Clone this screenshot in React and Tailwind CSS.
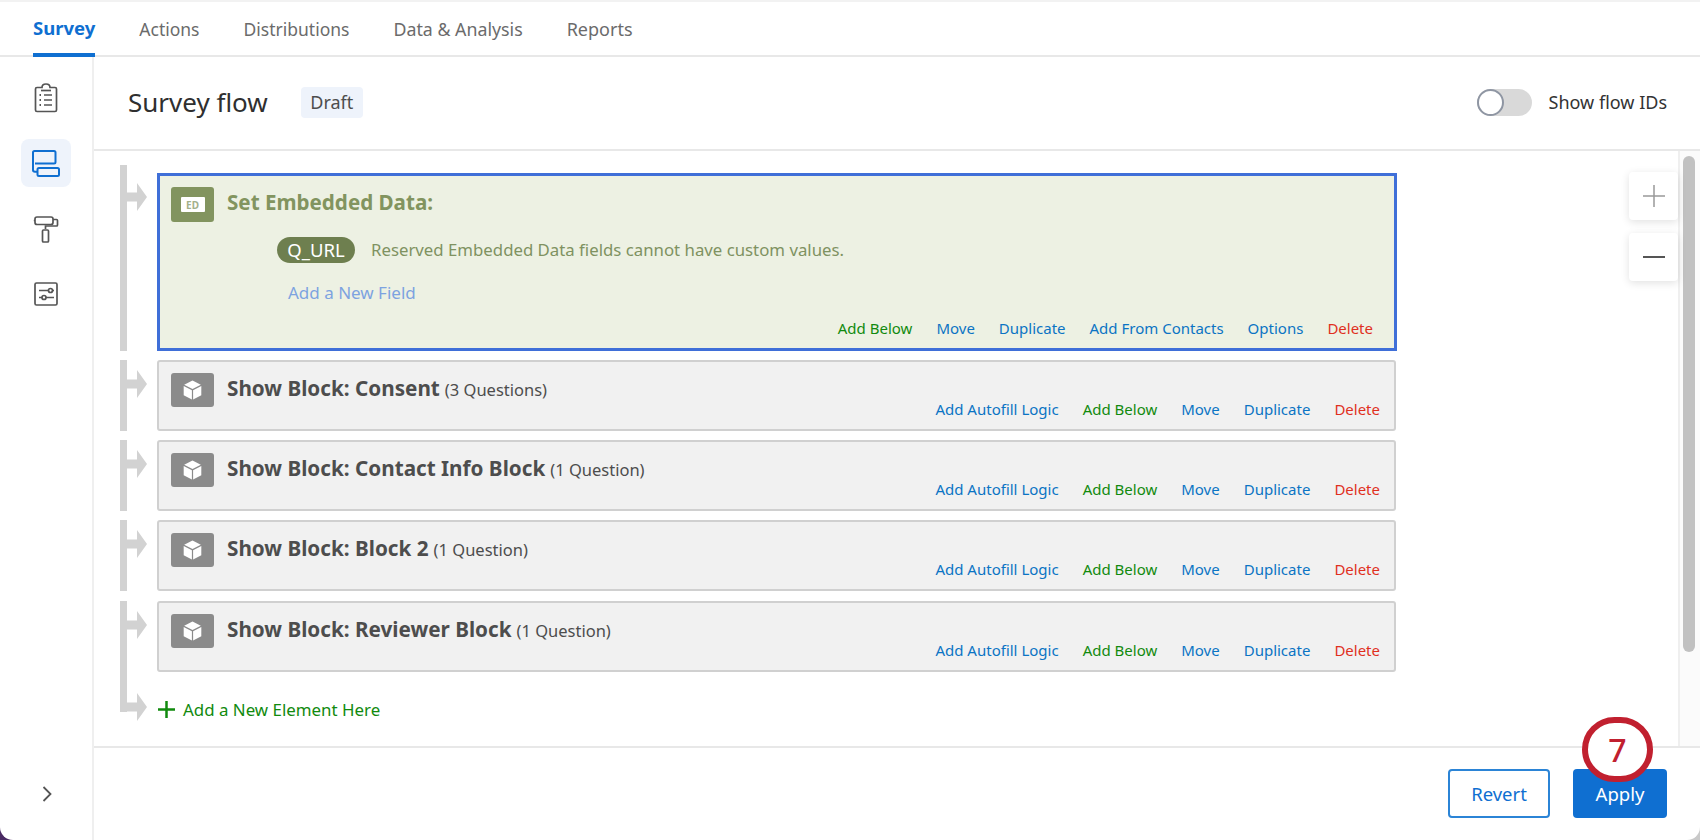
import React from 'react';

const FONT = "font-['Noto_Sans',sans-serif]";

function ClipboardIcon() {
  return (
    <svg width="24" height="30" viewBox="0 0 24 30" fill="none" stroke="#555" strokeWidth="1.7">
      <path d="M8 4.500H3a1.500 1.500 0 0 0-1.500 1.500v21A1.500 1.500 0 0 0 3 28.500h18a1.500 1.500 0 0 0 1.500-1.500V6A1.500 1.500 0 0 0 21 4.500h-5c0-2-1.600-3.500-4-3.500S8 2.500 8 4.500Z" />
      <path d="M7 7.500h10" />
      <path d="M10 12h8M10 17h8M10 22h8" />
      <path d="M5.500 12h1.500M5.500 17h1.500M5.500 22h1.500" strokeWidth="2" />
    </svg>
  );
}

function FlowIcon() {
  return (
    <svg width="28" height="27" viewBox="0 0 28 27" fill="none" stroke="#0f6fd1" strokeWidth="2">
      <path d="M3 13.500H22a1.500 1.500 0 0 0 1.500-1.500V2.500A1.500 1.500 0 0 0 22 1H2.500A1.500 1.500 0 0 0 1 2.500V20c0 1.200.9 1.800 2 1.800h3" />
      <rect x="5.500" y="18" width="21.500" height="8" rx="1.500" />
    </svg>
  );
}

function RollerIcon() {
  return (
    <svg width="26" height="27" viewBox="0 0 26 27" fill="none" stroke="#555" strokeWidth="1.7">
      <rect x="2" y="1" width="18" height="7.500" rx="2" />
      <path d="M2 4.500H0.800" />
      <path d="M20 3.500h3.500a1 1 0 0 1 1 1v4.500a1 1 0 0 1-1 1H12.500v3" />
      <rect x="9.500" y="14" width="6" height="12" rx="1" />
    </svg>
  );
}

function SlidersIcon() {
  return (
    <svg width="24" height="24" viewBox="0 0 24 24" fill="none" stroke="#555" strokeWidth="1.7">
      <rect x="1" y="1" width="22" height="22" rx="1.500" />
      <path d="M5 8.500h9.500M18.500 8.500H20M5 15.500h3M12 15.500h8" />
      <circle cx="16.500" cy="8.500" r="2" />
      <circle cx="10" cy="15.500" r="2" />
    </svg>
  );
}

function BlockIcon() {
  return (
    <div className="flex h-[34px] w-[43px] shrink-0 items-center justify-center rounded-[3px] bg-[#8b8b8b]">
      <svg width="19" height="20" viewBox="0 0 19 20" fill="#fff">
        <path d="M9.500 0.500 17.800 4.800 9.500 9 1.200 4.800Z" />
        <path d="M0.700 6 8.900 10.200V19.500L0.700 15.200Z" />
        <path d="M18.300 6 10.100 10.200V19.500L18.300 15.200Z" />
      </svg>
    </div>
  );
}

// connector between the flow line and a card
function Arrow({ className }) {
  return (
    <svg width="20" height="28" viewBox="0 0 20 28" className={`shrink-0 ${className}`} fill="#d2d2d2">
      <path d="M0 9.500H10V0L20 14 10 28V18.500H0Z" />
    </svg>
  );
}

function Actions({ items, className }) {
  return (
    <div className={`flex justify-end gap-[24px] text-[15px] leading-[20px] ${className}`}>
      {items.map(([label, color]) => (
        <span key={label} className={color}>{label}</span>
      ))}
    </div>
  );
}

const BLUE = 'text-[#0b74c4]';
const GREEN = 'text-[#118a0e]';
const RED = 'text-[#e0301e]';

const blockActions = [
  ['Add Autofill Logic', BLUE],
  ['Add Below', GREEN],
  ['Move', BLUE],
  ['Duplicate', BLUE],
  ['Delete', RED],
];

const blocks = [
  { name: 'Consent', count: '(3 Questions)' },
  { name: 'Contact Info Block', count: '(1 Question)' },
  { name: 'Block 2', count: '(1 Question)' },
  { name: 'Reviewer Block', count: '(1 Question)' },
];

function BlockRow({ name, count }) {
  return (
    <div className="flex pb-[9.200px]">
      <div className="w-[7px] shrink-0 bg-[#d2d2d2]" />
      <div className="w-[30px] shrink-0">
        <Arrow className="mt-[10px]" />
      </div>
      <div className="h-[71px] w-[1239px] rounded-[3px] border-2 border-[#d0d0d0] bg-[#f1f1f1] pl-[12px] pt-[11px]">
        <div className="flex items-start">
          <BlockIcon />
          <div className="ml-[13px] mt-[2px] leading-[27px] text-[#4d4d4d]">
            <span className="text-[20.700px] font-bold">Show Block: {name}</span>
            <span className="ml-[5px] text-[16.500px]">{count}</span>
          </div>
        </div>
        <Actions items={blockActions} className="-mt-[8px] pr-[14px]" />
      </div>
    </div>
  );
}

export default function App() {
  return (
    <div className={`${FONT} relative h-[840px] w-[1700px] overflow-hidden bg-gradient-to-r from-[#4a2a63] from-50% to-[#c9c9c9] to-50%`}>
      <div className="flex h-full flex-col overflow-hidden rounded-b-[13px] bg-white">
        <div className="h-[2px] bg-[#f2f2f2]" />

        {/* top tabs */}
        <div className="flex h-[55px] gap-[44px] border-b-2 border-[#e8e8e8] pl-[33px] text-[17.500px]">
          <div className="-mb-[2px] border-b-4 border-[#0f6fd1] pt-[13px] text-[18.500px] font-bold leading-[26px] text-[#0f6fd1]">Survey</div>
          <div className="pt-[14px] text-[#6b6b6b]">Actions</div>
          <div className="pt-[14px] text-[#6b6b6b]">Distributions</div>
          <div className="pt-[14px] text-[17.800px] leading-[26px] text-[#6b6b6b]">Data &amp; Analysis</div>
          <div className="pt-[14px] text-[18px] leading-[26px] text-[#6b6b6b]">Reports</div>
        </div>

        <div className="flex min-h-0 flex-1">
          {/* left rail */}
          <div className="flex w-[94px] shrink-0 flex-col items-center border-r-2 border-[#efefef] pt-[17px]">
            <div className="flex h-[48px] w-[50px] items-center justify-center"><ClipboardIcon /></div>
            <div className="mt-[17px] flex h-[48px] w-[50px] items-center justify-center rounded-[8px] bg-[#eef3fb]"><FlowIcon /></div>
            <div className="mt-[18px] flex h-[48px] w-[50px] items-center justify-center"><RollerIcon /></div>
            <div className="mt-[17px] flex h-[48px] w-[50px] items-center justify-center"><SlidersIcon /></div>
            <svg width="10" height="16" viewBox="0 0 10 16" fill="none" stroke="#555" strokeWidth="1.800" className="ml-[2px] mt-auto mb-[38px]">
              <path d="M1.500 1 8.500 8 1.500 15" />
            </svg>
          </div>

          <div className="flex min-w-0 flex-1 flex-col">
            {/* header */}
            <div className="flex h-[94px] shrink-0 items-center border-b-2 border-[#e8e8e8] pb-[2px] pl-[34px] pr-[33px]">
              <div className="text-[26px] text-[#2f2f2f]">Survey flow</div>
              <div className="ml-[33px] flex h-[31px] w-[62px] items-center justify-center rounded-[4px] bg-[#eef3fb] text-[18px] text-[#4d4d4d]">Draft</div>
              <div className="ml-auto flex items-center">
                <div className="h-[27px] w-[55px] rounded-full bg-[#d9d9d9]">
                  <div className="h-[27px] w-[27px] rounded-full border-2 border-[#8f96a3] bg-white" />
                </div>
                <div className="ml-[17px] mt-px text-[18px] text-[#333]">Show flow IDs</div>
              </div>
            </div>

            {/* flow canvas */}
            <div className="relative flex min-h-0 flex-1">
              <div className="flex-1 pl-[26px] pt-[14px]">
                <div className="flex pb-[9px]">
                  <div className="w-[7px] shrink-0 bg-[#d2d2d2]" />
                  <div className="w-[30px] shrink-0">
                    <Arrow className="mt-[18px]" />
                  </div>
                  <div className="mt-[8px] h-[178px] w-[1240px] border-[3px] border-[#3f6fd8] bg-[#edf1e3] pl-[11px] pt-[11px]">
                    <div className="flex items-center">
                      <div className="flex h-[35px] w-[43px] items-center justify-center rounded-[3px] bg-[#82945f]">
                        <div className="flex h-[15px] w-[24px] items-center justify-center rounded-[1px] bg-white text-[10px] font-bold leading-none text-[#a3b08a]">ED</div>
                      </div>
                      <div className="ml-[13px] pb-[4px] text-[20.600px] font-bold text-[#82945f]">Set Embedded Data:</div>
                    </div>
                    <div className="ml-[106px] mt-[15px] flex items-center">
                      <div className="flex h-[26px] w-[78px] items-center justify-center rounded-full bg-[#6e7f4f] text-[18.500px] text-white">Q_URL</div>
                      <div className="ml-[16px] text-[16.800px] text-[#7f9261]">Reserved Embedded Data fields cannot have custom values.</div>
                    </div>
                    <div className="ml-[117px] mt-[18px] text-[17px] leading-[24px] text-[#7da3e0]">Add a New Field</div>
                    <Actions
                      className="mt-[13px] pr-[21px]"
                      items={[
                        ['Add Below', GREEN],
                        ['Move', BLUE],
                        ['Duplicate', BLUE],
                        ['Add From Contacts', BLUE],
                        ['Options', BLUE],
                        ['Delete', RED],
                      ]}
                    />
                  </div>
                </div>

                {blocks.map((b) => (
                  <BlockRow key={b.name} name={b.name} count={b.count} />
                ))}

                <div className="-mt-[10px] flex">
                  <div className="h-[41px] w-[7px] bg-[#d2d2d2]" />
                  <Arrow className="mt-[22px]" />
                  <div className="ml-[11px] mt-[27px] flex items-center text-[16.900px] leading-[24px] text-[#118a0e]">
                    <svg width="17" height="17" viewBox="0 0 17 17" stroke="#118a0e" strokeWidth="2.500" className="mr-[8px]">
                      <path d="M8.500 0v17M0 8.500h17" />
                    </svg>
                    Add a New Element Here
                  </div>
                </div>
              </div>

              {/* scrollbar */}
              <div className="w-[22px] shrink-0 border-l-2 border-[#efefef] bg-[#fbfbfb] pl-[3px] pr-[5px] pt-[5px]">
                <div className="h-[496px] rounded-full bg-[#c1c1c1]" />
              </div>

              {/* zoom controls float over the canvas */}
              <div className="absolute right-[22px] top-[21px] flex flex-col gap-[13px]">
                <div className="flex h-[48px] w-[49px] items-center justify-center rounded-[4px] bg-white shadow-[0_2px_8px_rgba(0,0,0,0.12)]">
                  <svg width="22" height="22" viewBox="0 0 22 22" stroke="#999" strokeWidth="1.500"><path d="M11 0v22M0 11h22" /></svg>
                </div>
                <div className="flex h-[48px] w-[49px] items-center justify-center rounded-[4px] bg-white shadow-[0_2px_8px_rgba(0,0,0,0.12)]">
                  <svg width="22" height="4" viewBox="0 0 22 4" stroke="#555" strokeWidth="2"><path d="M0 2h22" /></svg>
                </div>
              </div>
            </div>

            {/* footer */}
            <div className="flex h-[94px] shrink-0 justify-end gap-[23px] border-t-2 border-[#e8e8e8] pr-[33px] pt-[21px] text-[18.500px]">
              <div className="flex h-[49px] w-[102px] items-center justify-center rounded-[4px] border-2 border-[#2b84d6] text-[#0f6fd1]">Revert</div>
              <div className="flex h-[49px] w-[94px] items-center justify-center rounded-[4px] bg-[#0f6fd1] text-white">Apply</div>
            </div>
          </div>
        </div>
      </div>

      {/* annotation marker on top of the Apply button */}
      <div className="absolute left-[1582px] top-[717px] flex h-[65px] w-[71px] items-center justify-center rounded-full border-[6px] border-[#c1202f] bg-white text-[32px] font-medium text-[#c1202f]">7</div>
    </div>
  );
}
